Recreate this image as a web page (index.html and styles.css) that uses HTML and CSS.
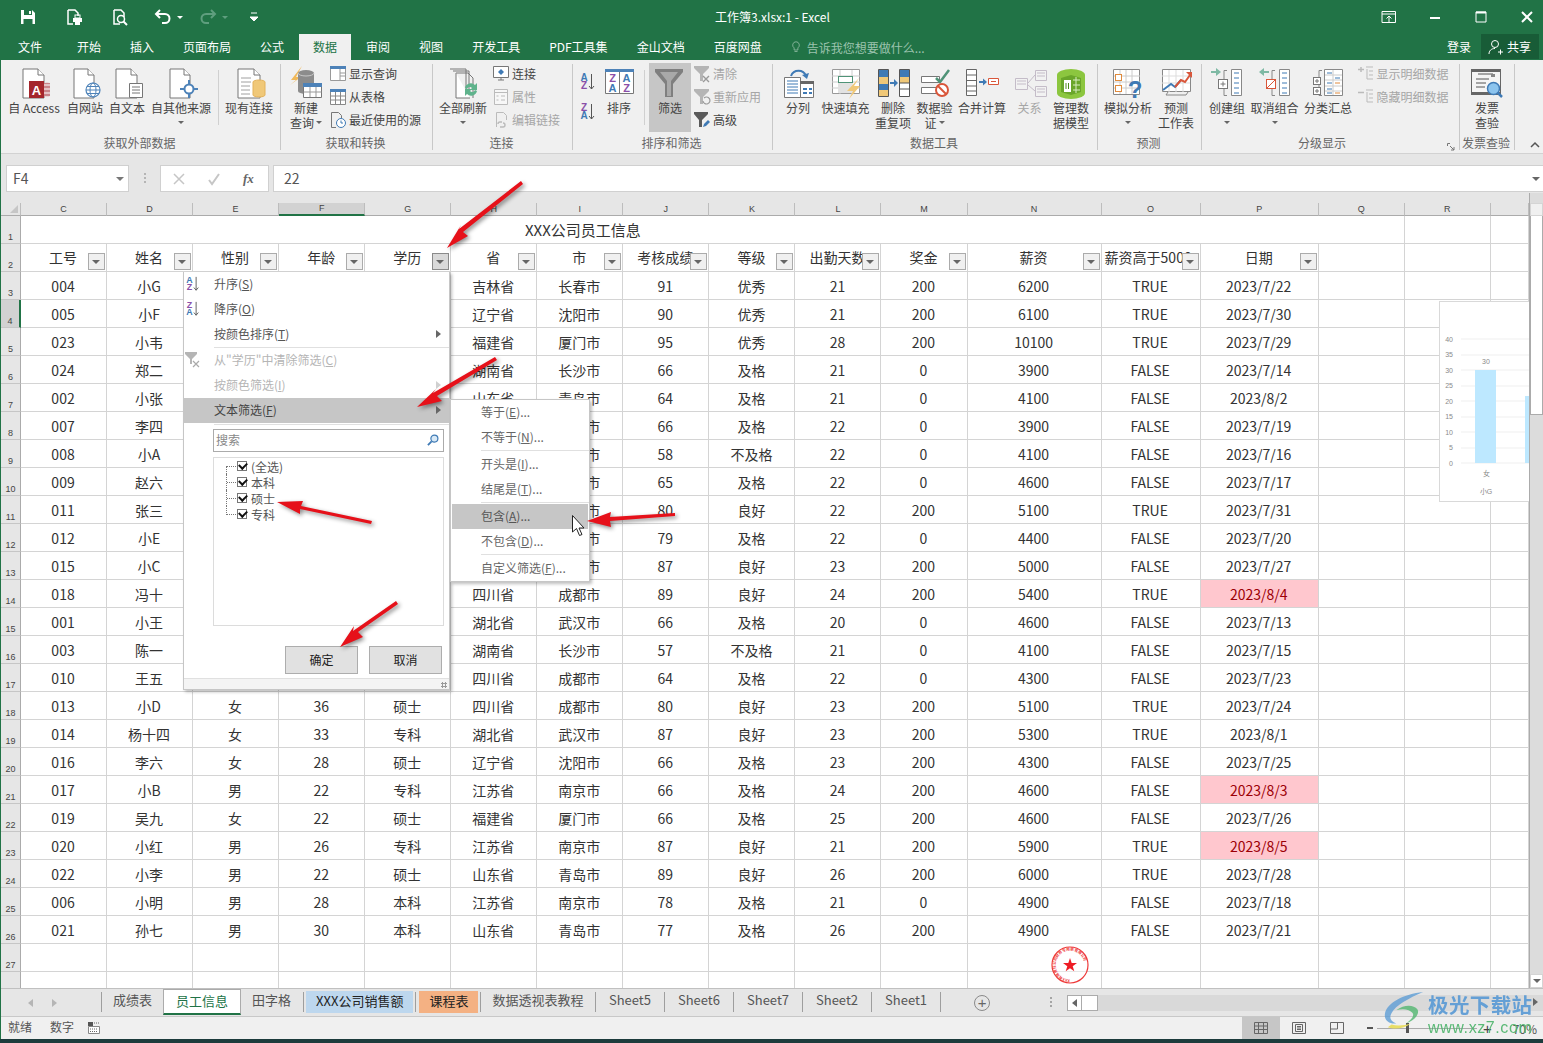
FILE: index.html
```html
<!DOCTYPE html>
<html lang="zh-CN">
<head>
<meta charset="utf-8">
<title>工作簿3.xlsx:1 - Excel</title>
<link rel="stylesheet" href="styles.css">
</head>
<body>
<div class="app">

<header class="titlebar">
  <div class="qat">
    <svg class="q16" viewBox="0 0 16 16"><path d="M1 1h11l3 3v11H1z" fill="#fff"/><rect x="4" y="1" width="8" height="5" fill="#217346"/><rect x="3.500" y="10" width="9" height="5" fill="#217346"/><rect x="9" y="2" width="2" height="3" fill="#fff"/></svg>
    <svg class="q16 q-m30" viewBox="0 0 16 16"><path d="M2 1h7l3 3v3M7 15H2V1" fill="none" stroke="#fff" stroke-width="1.500"/><rect x="7" y="9" width="9" height="4" fill="#fff"/><rect x="9" y="6" width="5" height="3" fill="none" stroke="#fff"/><rect x="9" y="13" width="5" height="3" fill="#fff"/></svg>
    <svg class="q16 q-m30" viewBox="0 0 16 16"><path d="M2 1h7l3 3v4M8 15H2V1" fill="none" stroke="#fff" stroke-width="1.500"/><circle cx="9" cy="10" r="3.500" fill="none" stroke="#fff" stroke-width="1.500"/><path d="M11.500 12.500L15 16" stroke="#fff" stroke-width="2"/></svg>
    <svg class="q16 q-m27" viewBox="0 0 16 16"><path d="M5 1L1 5l4 4M1.500 5H10a4.500 4.500 0 0 1 0 9H7" fill="none" stroke="#fff" stroke-width="2"/></svg>
    <i class="caret q-m6"></i>
    <svg class="q16 q-m17" viewBox="0 0 16 16"><path d="M11 1l4 4-4 4M14.500 5H6a4.500 4.500 0 0 0 0 9h3" fill="none" stroke="#5f9e7e" stroke-width="2"/></svg>
    <i class="caret dim q-m6"></i>
    <svg class="q8 q-m22" viewBox="0 0 8 10"><path d="M1 1h6M0 5h8l-4 4z" stroke="#fff" fill="#fff"/></svg>
  </div>
  <div class="doc-title">工作簿3.xlsx:1 - Excel</div>
  <div class="winctl">
    <svg class="q16" viewBox="0 0 16 16"><path d="M1 2.500h13.500v11H1z" fill="none" stroke="#fff"/><path d="M1 5h14" stroke="#fff"/><path d="M8 13V7M5.500 9.500L8 7l2.500 2.500" fill="none" stroke="#fff"/></svg>
    <svg class="q16" viewBox="0 0 16 16"><rect x="3" y="8" width="10" height="2" fill="#fff"/></svg>
    <svg class="q16" viewBox="0 0 16 16"><path d="M3 3h10v10H3z" fill="none" stroke="#fff"/><path d="M3 3.500h10" stroke="#fff" stroke-width="2"/></svg>
    <svg class="q16" viewBox="0 0 16 16"><path d="M3 3l10 10M13 3L3 13" stroke="#fff" stroke-width="2"/></svg>
  </div>
</header>

<nav class="tabsbar">
  <a class="rt rt-file">文件</a><a class="rt">开始</a><a class="rt">插入</a><a class="rt">页面布局</a><a class="rt">公式</a><a class="rt on">数据</a><a class="rt">审阅</a><a class="rt">视图</a><a class="rt">开发工具</a><a class="rt">PDF工具集</a><a class="rt">金山文档</a><a class="rt">百度网盘</a>
  <div class="tell">
    <svg class="q12" viewBox="0 0 12 16"><path d="M6 1a4.500 4.500 0 0 0-2.500 8.200V12h5V9.200A4.500 4.500 0 0 0 6 1z" fill="none" stroke="#9cc3ae"/><path d="M4 14h4" stroke="#9cc3ae"/></svg>
    <span>告诉我您想要做什么...</span>
  </div>
  <a class="login">登录</a>
  <div class="share">
    <svg class="q16" viewBox="0 0 16 16"><circle cx="7" cy="5" r="3.500" fill="none" stroke="#fff"/><path d="M1 15c0-3 2-5.500 6-5.500M10 13h5M12.500 10.500v5" fill="none" stroke="#fff"/></svg>
    <span>共享</span>
  </div>
</nav>

<section class="ribbon">
  <div class="grp g1">
    <div class="gb">
      <div class="big w54"><svg class="ic" viewBox="0 0 32 32"><path class="doc" d="M5 1H20L26 7V30H5Z"/><path class="doc" d="M20 1V7H26"/><path d="M26 15a6 2 0 0 1 6 0v13a6 2 0 0 1-6 0z" fill="#c9858a"/><path d="M25 17h7M25 21h7M25 25h7" stroke="#fff"/><rect x="11" y="13" width="15" height="17" fill="#a4262c"/><text class="t-a" x="18.500" y="27">A</text></svg><span>自 Access</span></div>
      <div class="big"><svg class="ic" viewBox="0 0 32 32"><path class="doc" d="M5 1H19L25 7V30H5Z"/><path class="doc" d="M19 1V7H25"/><circle cx="24" cy="22" r="7" fill="#fff" stroke="#4d82b8" stroke-width="1.200"/><ellipse cx="24" cy="22" rx="3" ry="7" fill="none" stroke="#4d82b8"/><path d="M17 22h14M18 18.500h12M18 25.500h12" stroke="#4d82b8"/></svg><span>自网站</span></div>
      <div class="big"><svg class="ic" viewBox="0 0 32 32"><path class="doc" d="M5 1H20L26 7V30H5Z"/><path class="doc" d="M20 1V7H26"/><path d="M18.500 15.500h13v14h-13z" fill="#fff" stroke="#767676"/><path d="M21 19h8M21 22h8M21 25h8" stroke="#767676"/></svg><span>自文本</span></div>
      <div class="big w60"><svg class="ic" viewBox="0 0 32 32"><path class="doc" d="M5 1H19L25 7V30H5Z"/><path class="doc" d="M19 1V7H25"/><circle cx="24" cy="21" r="4.500" fill="#fff" stroke="#4d82b8" stroke-width="2"/><path d="M24 12v5M24 25v5M15 21h5M28 21h5" stroke="#4d82b8" stroke-width="2"/></svg><span>自其他来源</span><i class="dd"></i></div>
      <i class="vsep vs1"></i>
      <div class="big w48"><svg class="ic" viewBox="0 0 32 32"><path class="doc" d="M5 1H21L27 7V30H5Z"/><path class="doc" d="M21 1V7H27"/><path d="M8 10h10M8 14h10M8 18h9M8 22h9M8 26h9" stroke="#a0a0a0"/><path d="M20 14a6 2 0 0 1 12 0v13a6 2 0 0 1-12 0z" fill="#f0c878" stroke="#e3b25b"/></svg><span>现有连接</span></div>
    </div>
    <div class="gl">获取外部数据</div>
  </div>
  <div class="grp g2">
    <div class="gb">
      <div class="big"><svg class="ic" viewBox="0 0 32 32"><path d="M12 -2L1 12h5L0 17 11 9H6z" fill="#f0b95a"/><path d="M8 5a8 3 0 0 1 16 0v18a8 3 0 0 1-16 0z" fill="#8c8c8c"/><path d="M8 5a8 3 0 0 0 16 0" fill="none" stroke="#c8c8c8"/><path d="M13.500 15.500h18v14h-18z" fill="#fff" stroke="#767676"/><path d="M13 15h19v4H13z" fill="#4d82b8"/><path d="M13.500 24h18M20 19v10M26 19v10" stroke="#999"/></svg><span>新建</span><span>查询 <i class="dd inl"></i></span></div>
      <div class="col">
        <div class="sm"><svg class="ic16" viewBox="0 0 16 16"><path d="M.5.5h15v14H.5z" fill="#fff" stroke="#999"/><path d="M0 0h16v3H0z" fill="#4d82b8"/><path d="M10 3v11M10 7h6M10 10h6" stroke="#999"/></svg>显示查询</div>
        <div class="sm"><svg class="ic16" viewBox="0 0 16 16"><path d="M.5.5h15v15H.5z" fill="#fff" stroke="#888"/><path d="M0 0h16v3H0z" fill="#4d82b8"/><path d="M.5 7h15M.5 11h15M5.500 3v12M10.500 3v12" stroke="#888"/></svg>从表格</div>
        <div class="sm"><svg class="ic16" viewBox="0 0 16 16"><path d="M1.500.5h7l3 3V6M6 15.500H1.500V.5" fill="none" stroke="#777"/><circle cx="11" cy="11" r="4.500" fill="#fff" stroke="#3f7ab5"/><path d="M11 8.500V11h2" fill="none" stroke="#3f7ab5"/></svg>最近使用的源</div>
      </div>
    </div>
    <div class="gl">获取和转换</div>
  </div>
  <div class="grp g3">
    <div class="gb">
      <div class="big w48"><svg class="ic" viewBox="0 0 32 32"><path d="M3 1h16v21M6 3h16v23M9 5h12l5 5v20" fill="none" stroke="#777"/><path d="M9 5v25h14" fill="#fff" stroke="#777"/><path d="M18 20a6 6 0 0 1 10-3l2-2v7h-7l2-2a3 3 0 0 0-5 1zM30 23a6 6 0 0 1-10 3l-2 2v-7h7l-2 2a3 3 0 0 0 5-1z" fill="#5fb38c"/></svg><span>全部刷新</span><i class="dd"></i></div>
      <div class="col">
        <div class="sm"><svg class="ic16" viewBox="0 0 16 16"><path d="M.5.5h15v11H.5z" fill="#fff" stroke="#777"/><path d="M5 14h6M8 12v2" stroke="#777"/><path d="M8 3l3 3-3 3-3-3z" fill="#3f7ab5"/></svg>连接</div>
        <div class="sm off"><svg class="ic16" viewBox="0 0 16 16"><path d="M1.500.5h13v15h-13z" fill="#f7f7f7" stroke="#bbb"/><path d="M1 3.500h14M3.500 7h2M8 7h4M3.500 11h2M8 11h4" stroke="#bbb"/></svg>属性</div>
        <div class="sm off"><svg class="ic16" viewBox="0 0 16 16"><path d="M3.500.5h7l3 3V8M3.500 15V.5" fill="none" stroke="#bbb"/><path d="M5 12a2 2 0 0 1 2-2h2M10 15H7M10 11a2 2 0 0 1 0 4" fill="none" stroke="#bbb" stroke-width="1.400"/></svg>编辑链接</div>
      </div>
    </div>
    <div class="gl">连接</div>
  </div>
  <div class="grp g4">
    <div class="gb">
      <div class="sortcol">
        <svg class="ic16t" viewBox="0 0 16 18"><text class="t-s blue" x="4" y="8">A</text><text class="t-s purp" x="4" y="16">Z</text><path d="M11.500 1v15M9 13l2.500 3 2.500-3" fill="none" stroke="#555"/></svg>
        <svg class="ic16t" viewBox="0 0 16 18"><text class="t-s purp" x="4" y="8">Z</text><text class="t-s blue" x="4" y="16">A</text><path d="M11.500 1v15M9 13l2.500 3 2.500-3" fill="none" stroke="#555"/></svg>
      </div>
      <div class="big"><svg class="ic" viewBox="0 0 32 32"><path d="M2.500 1.500h28v24h-28z" fill="#fff" stroke="#777"/><path d="M2 1h29v3H2z" fill="#4d82b8"/><path d="M16.500 4v21" stroke="#777"/><text class="t-m purp" x="9.500" y="14">Z</text><text class="t-m blue" x="23.500" y="14">A</text><text class="t-m blue" x="9.500" y="24">A</text><text class="t-m purp" x="23.500" y="24">Z</text></svg><span>排序</span></div>
      <i class="vsep vs4"></i>
      <div class="big filter"><svg class="ic" viewBox="0 0 32 32"><path d="M1 1h28v3L19 16v13h-8V16L1 4z" fill="#7f7f7f"/><path d="M6 4h18l-7 9v15h-4V13z" fill="#a9a9a9"/></svg><span>筛选</span></div>
      <div class="col">
        <div class="sm off"><svg class="ic16" viewBox="0 0 16 16"><path d="M0 0h15v2L9 8v7H6V8L0 2z" fill="#b5b5b5"/><path d="M9 10l6 6M15 10l-6 6" stroke="#999" stroke-width="1.400"/></svg>清除</div>
        <div class="sm off"><svg class="ic16" viewBox="0 0 16 16"><path d="M0 0h15v2L9 8v7H6V8L0 2z" fill="#b5b5b5"/><path d="M9 12a3.500 3.500 0 1 0 1-3" fill="none" stroke="#999" stroke-width="1.200"/></svg>重新应用</div>
        <div class="sm"><svg class="ic16" viewBox="0 0 16 16"><path d="M0 0h14v2L8 8v7H5V8L0 2z" fill="#5a5a5a"/><path d="M9 15l1-3 4-4 2 2-4 4z" fill="#3f7ab5"/></svg>高级</div>
      </div>
    </div>
    <div class="gl">排序和筛选</div>
  </div>
  <div class="grp g5">
    <div class="gb">
      <div class="big"><svg class="ic" viewBox="0 0 32 32"><path d="M2.500 9.500h16v20h-16z" fill="#fff" stroke="#777"/><path d="M5 13h11M5 16h11M5 19h11M5 22h11M5 25h11" stroke="#3f7ab5"/><path d="M18.500 13.500h13v16h-13z" fill="#fff" stroke="#777"/><path d="M18 13h14v3H18z" fill="#666"/><path d="M21 20h4v2h-4zM27 20h3v2h-3zM21 24h4v2h-4zM27 24h3v2h-3z" fill="#3f7ab5"/><path d="M9 8a8 8 0 0 1 15 0" fill="none" stroke="#3f7ab5" stroke-width="2"/><path d="M20 7l5 4 2-6z" fill="#3f7ab5"/></svg><span>分列</span></div>
      <div class="big w48"><svg class="ic" viewBox="0 0 32 32"><path d="M2.500 1.500h27v24h-27z" fill="#fff" stroke="#999"/><path d="M2 8h28M2 14h28M2 20h28M10 2v24M22 2v24" stroke="#ccc"/><rect x="8.500" y="8.500" width="14" height="6" fill="#fff" stroke="#4f9377"/><path d="M8 15h14v10H8z" fill="#e2e2e2"/><path d="M29 10l-12 13h6l-4 8 11-13h-6z" fill="#f0c878"/></svg><span>快速填充</span></div>
      <div class="big"><svg class="ic" viewBox="0 0 32 32"><path d="M1.500 1.500h10v27h-10zM22.500 1.500h10v27h-10z" fill="#fff" stroke="#555"/><path d="M2 2h9v7H2zM2 16h9v6H2zM23 2h9v7H23z" fill="#3f7ab5"/><path d="M2 9h9v7H2zM2 22h9v6H2zM23 9h9v6H23z" fill="#f0c878"/><path d="M23 15h9M23 21h9" stroke="#555"/><path d="M13 15h6" stroke="#3f7ab5" stroke-width="2"/><path d="M17 11l4 4-4 4z" fill="#3f7ab5"/></svg><span>删除</span><span>重复项</span></div>
      <div class="big"><svg class="ic" viewBox="0 0 32 32"><path d="M2.500 8.500h18v6h-18zM2.500 19.500h18v6h-18z" fill="#fff" stroke="#777"/><path d="M17 10l4 4 9-12" fill="none" stroke="#4f9377" stroke-width="2.500"/><circle cx="23" cy="22" r="6" fill="#fff" stroke="#d9563a" stroke-width="2"/><path d="M19 18l8 8" stroke="#d9563a" stroke-width="2"/></svg><span>数据验</span><span>证 <i class="dd inl"></i></span></div>
      <div class="big w48"><svg class="ic" viewBox="0 0 32 32"><path d="M.5 1.500h10v26h-10z" fill="#fff" stroke="#666"/><path d="M1 7h9M1 12.500h9M1 18h9M1 23h9" stroke="#666"/><path d="M13 14h6" stroke="#3f7ab5" stroke-width="2"/><path d="M17 10.500l4 3.500-4 3.500z" fill="#3f7ab5"/><path d="M22.500 10.500h10v6h-10z" fill="#fff" stroke="#d9563a"/><path d="M25 13.500h5" stroke="#d9563a"/></svg><span>合并计算</span></div>
      <div class="big off"><svg class="ic" viewBox="0 0 32 32"><path d="M1.500 10.500h12v11h-12zM21.500 2.500h11v10h-11zM21.500 18.500h11v10h-11z" fill="#f2f2f2" stroke="#c4bcc8"/><path d="M3 13h9M3 16h9M23 5h8M23 8h8M23 21h8M23 24h8" stroke="#c4bcc8"/><path d="M14 15l7-8M14 17l7 6" stroke="#c4bcc8"/></svg><span>关系</span></div>
      <div class="big"><svg class="ic" viewBox="0 0 32 32"><path d="M2 7a14 6 0 0 1 28 0v18a14 6 0 0 1-28 0z" fill="#8cc63f"/><path d="M6 10l10-3 10 3v14l-10 3-10-3z" fill="#6aa62a"/><path d="M9 12h7v12H9z" fill="#fff"/><path d="M18 12h7M18 17h7M18 22h7M21 9v16" stroke="#d8edc0"/><path d="M11 21v-6M13.500 15v6" stroke="#4f8a1e"/></svg><span>管理数</span><span>据模型</span></div>
    </div>
    <div class="gl">数据工具</div>
  </div>
  <div class="grp g6">
    <div class="gb">
      <div class="big w48"><svg class="ic" viewBox="0 0 32 32"><path d="M1.500 1.500h26v25h-26z" fill="#fff" stroke="#888"/><path d="M8 2v24M14 2v24M20 2v24M2 8h26M2 14h26M2 20h26" stroke="#ccc"/><rect x="3.500" y="6.500" width="6" height="6" fill="#fff" stroke="#e08a3c"/><rect x="3.500" y="17.500" width="6" height="6" fill="#fff" stroke="#e08a3c"/><text class="t-q" x="23" y="30">?</text></svg><span>模拟分析</span><i class="dd"></i></div>
      <div class="big"><svg class="ic" viewBox="0 0 32 32"><path d="M2.500 1.500h28v22h-28z" fill="#fff" stroke="#888"/><path d="M9 2v22M16 2v22M23 2v22M2 8h28M2 15h28" stroke="#ddd"/><path d="M3 22l8-6 4 3 6-7" fill="none" stroke="#3f7ab5" stroke-width="2"/><path d="M15 19l6-7 4 2 5-7" fill="none" stroke="#d9563a" stroke-width="2"/><path d="M26 4h6v6z" fill="#d9563a"/><path d="M8 24l-2 3h20l2-3" fill="none" stroke="#888"/></svg><span>预测</span><span>工作表</span></div>
    </div>
    <div class="gl">预测</div>
  </div>
  <div class="grp g7">
    <div class="gb">
      <div class="big"><svg class="ic" viewBox="0 0 32 32"><path d="M0 4h7" stroke="#7eb9a4" stroke-width="2"/><path d="M5 0l5 4-5 4z" fill="#7eb9a4"/><path d="M16 2.500h-3v25h3" fill="none" stroke="#888"/><rect x="7.500" y="11.500" width="9" height="9" fill="#fff" stroke="#777"/><path d="M9.500 16h5M12 13.500v5" stroke="#777"/><path d="M20.500 1.500h10v26h-10z" fill="#fff" stroke="#888"/><path d="M23 5h5M23 10h5M23 15h5M23 20h5M23 25h5" stroke="#3f7ab5"/></svg><span>创建组</span><i class="dd"></i></div>
      <div class="big w48"><svg class="ic" viewBox="0 0 32 32"><path d="M10 4H3" stroke="#7eb9a4" stroke-width="2"/><path d="M5 0L0 4l5 4z" fill="#7eb9a4"/><path d="M16 2.500h-3v25h3" fill="none" stroke="#888"/><rect x="7.500" y="11.500" width="9" height="9" fill="#fff" stroke="#d9563a"/><path d="M8 20l8-8" stroke="#d9563a"/><path d="M20.500 1.500h10v26h-10z" fill="#fff" stroke="#888"/><path d="M23 5h5M23 10h5M23 15h5M23 20h5M23 25h5" stroke="#3f7ab5"/></svg><span>取消组合</span><i class="dd"></i></div>
      <div class="big w48"><svg class="ic" viewBox="0 0 32 32"><path d="M10 2.500H7v25h3" fill="none" stroke="#888"/><rect x="1.500" y="9.500" width="7" height="7" fill="#fff" stroke="#777"/><path d="M3 13h4M5 11v4" stroke="#777"/><rect x="1.500" y="19.500" width="7" height="7" fill="#fff" stroke="#777"/><path d="M3 23h4M5 21v4" stroke="#777"/><path d="M12.500 1.500h18v26h-18z" fill="#fff" stroke="#888"/><path d="M21 2v25M13 7h17M13 12h17M13 18h17M13 23h17" stroke="#ccc"/><path d="M15 5h5M15 15h5M15 21h5" stroke="#3f7ab5"/><path d="M23 15h5M23 25h5" stroke="#e08a3c"/><path d="M23 10h5M15 25h5" stroke="#3f7ab5"/></svg><span>分类汇总</span></div>
      <div class="col">
        <div class="sm off"><svg class="ic16" viewBox="0 0 16 16"><path d="M0 3.500h6M3 1v5" stroke="#bbb" stroke-width="1.500"/><path d="M8 1h7M11 5h4M11 9h4M11 13h4M9 3v10h2" fill="none" stroke="#bbb"/></svg>显示明细数据</div>
        <div class="sm off"><svg class="ic16" viewBox="0 0 16 16"><path d="M0 3.500h6" stroke="#bbb" stroke-width="1.500"/><path d="M8 1h7M11 5h4M11 9h4M11 13h4M9 3v10h2" fill="none" stroke="#bbb"/></svg>隐藏明细数据</div>
      </div>
    </div>
    <div class="gl gl-launch">分级显示<svg class="launch" viewBox="0 0 8 8"><path d="M.5 3V.5H3M3 3l4 4M7 4v3H4" fill="none" stroke="#777"/></svg></div>
  </div>
  <div class="grp g8">
    <div class="gb">
      <div class="big"><svg class="ic" viewBox="0 0 32 32"><path d="M.5 1.500h29v25H.5z" fill="#f5f5f5" stroke="#666"/><path d="M0 1h30v3H0zM0 24h30v3H0z" fill="#666"/><path d="M7 6h15M5 11h13M5 15h10M5 19h9" stroke="#555"/><rect x="20" y="6" width="4" height="3" fill="#888"/><circle cx="22.500" cy="20.500" r="6" fill="#8cc4ee" stroke="#3f7ab5" stroke-width="1.500"/><path d="M26.500 24.500L31 29" stroke="#3f7ab5" stroke-width="2.500"/></svg><span>发票</span><span>查验</span></div>
    </div>
    <div class="gl">发票查验</div>
  </div>
  <svg class="collapse" viewBox="0 0 10 6"><path d="M1 5l4-4 4 4" fill="none" stroke="#555" stroke-width="1.500"/></svg>
</section>

<section class="fbar">
  <div class="namebox">F4<i class="dd nb"></i></div>
  <div class="grip"></div>
  <div class="fxbox">
    <svg class="q12" viewBox="0 0 12 12"><path d="M1 1l10 10M11 1L1 11" stroke="#c6c6c6" stroke-width="1.500"/></svg>
    <svg class="q12" viewBox="0 0 12 12"><path d="M1 7l3 4 7-10" fill="none" stroke="#c6c6c6" stroke-width="2"/></svg>
    <span class="fx">fx</span>
  </div>
  <div class="formula">22<i class="dd fchev"></i></div>
</section>

<section class="sheet">
  <div class="gridwrap">
    <table class="grid">
      <colgroup><col class="c-r"><col class="c-a"><col class="c-a"><col class="c-a"><col class="c-a"><col class="c-a"><col class="c-a"><col class="c-a"><col class="c-a"><col class="c-a"><col class="c-a"><col class="c-a"><col class="c-n"><col class="c-o"><col class="c-p"><col class="c-a"><col class="c-a"><col class="c-s"></colgroup>
      <thead><tr><th class="corner"><i class="tri"></i></th><th>C</th><th>D</th><th>E</th><th class="sel">F</th><th>G</th><th>H</th><th>I</th><th>J</th><th>K</th><th>L</th><th>M</th><th>N</th><th>O</th><th>P</th><th>Q</th><th>R</th><th></th></tr></thead>
      <tbody>
        <tr><th>1</th><td class="title" colspan="14">XXX公司员工信息</td><td></td><td></td><td></td></tr>
        <tr><th>2</th><td class="h">工号<i class="fb"></i></td><td class="h">姓名<i class="fb"></i></td><td class="h">性别<i class="fb"></i></td><td class="h">年龄<i class="fb"></i></td><td class="h">学历<i class="fb act"></i></td><td class="h">省<i class="fb"></i></td><td class="h">市<i class="fb"></i></td><td class="h">考核成绩<i class="fb"></i></td><td class="h">等级<i class="fb"></i></td><td class="h">出勤天数<i class="fb"></i></td><td class="h">奖金<i class="fb"></i></td><td class="h">薪资<i class="fb"></i></td><td class="h hl">薪资高于5000<i class="fb"></i></td><td class="h">日期<i class="fb"></i></td><td></td><td></td><td></td></tr>
        <tr><th>3</th><td>004</td><td>小G</td><td></td><td></td><td></td><td>吉林省</td><td>长春市</td><td>91</td><td>优秀</td><td>21</td><td>200</td><td>6200</td><td>TRUE</td><td>2023/7/22</td><td></td><td></td><td></td></tr>
        <tr><th class="sel">4</th><td>005</td><td>小F</td><td></td><td></td><td></td><td>辽宁省</td><td>沈阳市</td><td>90</td><td>优秀</td><td>21</td><td>200</td><td>6100</td><td>TRUE</td><td>2023/7/30</td><td></td><td></td><td></td></tr>
        <tr><th>5</th><td>023</td><td>小韦</td><td></td><td></td><td></td><td>福建省</td><td>厦门市</td><td>95</td><td>优秀</td><td>28</td><td>200</td><td>10100</td><td>TRUE</td><td>2023/7/29</td><td></td><td></td><td></td></tr>
        <tr><th>6</th><td>024</td><td>郑二</td><td></td><td></td><td></td><td>湖南省</td><td>长沙市</td><td>66</td><td>及格</td><td>21</td><td>0</td><td>3900</td><td>FALSE</td><td>2023/7/14</td><td></td><td></td><td></td></tr>
        <tr><th>7</th><td>002</td><td>小张</td><td></td><td></td><td></td><td>山东省</td><td>青岛市</td><td>64</td><td>及格</td><td>21</td><td>0</td><td>4100</td><td>FALSE</td><td>2023/8/2</td><td></td><td></td><td></td></tr>
        <tr><th>8</th><td>007</td><td>李四</td><td></td><td></td><td></td><td></td><td>南京市</td><td>66</td><td>及格</td><td>22</td><td>0</td><td>3900</td><td>FALSE</td><td>2023/7/19</td><td></td><td></td><td></td></tr>
        <tr><th>9</th><td>008</td><td>小A</td><td></td><td></td><td></td><td></td><td>南京市</td><td>58</td><td>不及格</td><td>22</td><td>0</td><td>4100</td><td>FALSE</td><td>2023/7/16</td><td></td><td></td><td></td></tr>
        <tr><th>10</th><td>009</td><td>赵六</td><td></td><td></td><td></td><td></td><td>南京市</td><td>65</td><td>及格</td><td>22</td><td>0</td><td>4600</td><td>FALSE</td><td>2023/7/17</td><td></td><td></td><td></td></tr>
        <tr><th>11</th><td>011</td><td>张三</td><td></td><td></td><td></td><td></td><td>南京市</td><td>80</td><td>良好</td><td>22</td><td>200</td><td>5100</td><td>TRUE</td><td>2023/7/31</td><td></td><td></td><td></td></tr>
        <tr><th>12</th><td>012</td><td>小E</td><td></td><td></td><td></td><td></td><td>南京市</td><td>79</td><td>及格</td><td>22</td><td>0</td><td>4400</td><td>FALSE</td><td>2023/7/20</td><td></td><td></td><td></td></tr>
        <tr><th>13</th><td>015</td><td>小C</td><td></td><td></td><td></td><td></td><td>南京市</td><td>87</td><td>良好</td><td>23</td><td>200</td><td>5000</td><td>FALSE</td><td>2023/7/27</td><td></td><td></td><td></td></tr>
        <tr><th>14</th><td>018</td><td>冯十</td><td></td><td></td><td></td><td>四川省</td><td>成都市</td><td>89</td><td>良好</td><td>24</td><td>200</td><td>5400</td><td>TRUE</td><td class="pink">2023/8/4</td><td></td><td></td><td></td></tr>
        <tr><th>15</th><td>001</td><td>小王</td><td></td><td></td><td></td><td>湖北省</td><td>武汉市</td><td>66</td><td>及格</td><td>20</td><td>0</td><td>4600</td><td>FALSE</td><td>2023/7/13</td><td></td><td></td><td></td></tr>
        <tr><th>16</th><td>003</td><td>陈一</td><td></td><td></td><td></td><td>湖南省</td><td>长沙市</td><td>57</td><td>不及格</td><td>21</td><td>0</td><td>4100</td><td>FALSE</td><td>2023/7/15</td><td></td><td></td><td></td></tr>
        <tr><th>17</th><td>010</td><td>王五</td><td></td><td></td><td></td><td>四川省</td><td>成都市</td><td>64</td><td>及格</td><td>22</td><td>0</td><td>4300</td><td>FALSE</td><td>2023/7/23</td><td></td><td></td><td></td></tr>
        <tr><th>18</th><td>013</td><td>小D</td><td>女</td><td>36</td><td>硕士</td><td>四川省</td><td>成都市</td><td>80</td><td>良好</td><td>23</td><td>200</td><td>5100</td><td>TRUE</td><td>2023/7/24</td><td></td><td></td><td></td></tr>
        <tr><th>19</th><td>014</td><td>杨十四</td><td>女</td><td>33</td><td>专科</td><td>湖北省</td><td>武汉市</td><td>87</td><td>良好</td><td>23</td><td>200</td><td>5300</td><td>TRUE</td><td>2023/8/1</td><td></td><td></td><td></td></tr>
        <tr><th>20</th><td>016</td><td>李六</td><td>女</td><td>28</td><td>硕士</td><td>辽宁省</td><td>沈阳市</td><td>66</td><td>及格</td><td>23</td><td>200</td><td>4300</td><td>FALSE</td><td>2023/7/25</td><td></td><td></td><td></td></tr>
        <tr><th>21</th><td>017</td><td>小B</td><td>男</td><td>22</td><td>专科</td><td>江苏省</td><td>南京市</td><td>66</td><td>及格</td><td>24</td><td>200</td><td>4600</td><td>FALSE</td><td class="pink">2023/8/3</td><td></td><td></td><td></td></tr>
        <tr><th>22</th><td>019</td><td>吴九</td><td>女</td><td>22</td><td>硕士</td><td>福建省</td><td>厦门市</td><td>66</td><td>及格</td><td>25</td><td>200</td><td>4600</td><td>FALSE</td><td>2023/7/26</td><td></td><td></td><td></td></tr>
        <tr><th>23</th><td>020</td><td>小红</td><td>男</td><td>26</td><td>专科</td><td>江苏省</td><td>南京市</td><td>87</td><td>良好</td><td>21</td><td>200</td><td>5900</td><td>TRUE</td><td class="pink">2023/8/5</td><td></td><td></td><td></td></tr>
        <tr><th>24</th><td>022</td><td>小李</td><td>男</td><td>22</td><td>硕士</td><td>山东省</td><td>青岛市</td><td>89</td><td>良好</td><td>26</td><td>200</td><td>6000</td><td>TRUE</td><td>2023/7/28</td><td></td><td></td><td></td></tr>
        <tr><th>25</th><td>006</td><td>小明</td><td>男</td><td>28</td><td>本科</td><td>江苏省</td><td>南京市</td><td>78</td><td>及格</td><td>21</td><td>0</td><td>4900</td><td>FALSE</td><td>2023/7/18</td><td></td><td></td><td></td></tr>
        <tr><th>26</th><td>021</td><td>孙七</td><td>男</td><td>30</td><td>本科</td><td>山东省</td><td>青岛市</td><td>77</td><td>及格</td><td>26</td><td>200</td><td>4900</td><td>FALSE</td><td>2023/7/21</td><td></td><td></td><td></td></tr>
        <tr><th>27</th><td></td><td></td><td></td><td></td><td></td><td></td><td></td><td></td><td></td><td></td><td></td><td></td><td></td><td></td><td></td><td></td><td></td></tr>
        <tr><th></th><td></td><td></td><td></td><td></td><td></td><td></td><td></td><td></td><td></td><td></td><td></td><td></td><td></td><td></td><td></td><td></td><td></td></tr>
      </tbody>
    </table>
  </div>
  <div class="vscroll">
    <div class="vs-up"></div>
    <div class="vs-thumb"></div>
    <div class="vs-track"></div>
    <div class="vs-down"><i class="dd"></i></div>
  </div>
</section>

<section class="tabsrow">
  <div class="tnav"><i class="tl"></i><i class="tr"></i></div>
  <i class="sep"></i>
  <a class="tab">成绩表</a>
  <a class="tab active">员工信息</a>
  <a class="tab tab-r">田字格</a>
  <i class="sep"></i>
  <a class="tab blue-t">XXX公司销售额</a>
  <i class="sep"></i>
  <a class="tab orange-t">课程表</a>
  <i class="sep"></i>
  <a class="tab tab-d">数据透视表教程</a>
  <i class="sep"></i>
  <a class="tab tab-w">Sheet5</a>
  <i class="sep"></i>
  <a class="tab tab-w">Sheet6</a>
  <i class="sep"></i>
  <a class="tab tab-w">Sheet7</a>
  <i class="sep"></i>
  <a class="tab tab-w">Sheet2</a>
  <i class="sep"></i>
  <a class="tab tab-w">Sheet1</a>
  <i class="sep"></i>
  <div class="addsheet">+</div>
  <div class="grip2"></div>
  <div class="hscroll"><div class="hs-l"><i class="tl dark"></i></div><div class="hs-t"></div><div class="hs-track"></div><div class="hs-r"><i class="tr dark"></i></div></div>
</section>

<footer class="status">
  <span class="st1">就绪</span>
  <span class="st2">数字</span>
  <svg class="q12 st3" viewBox="0 0 12 12"><path d="M0 0h5v4H0z" fill="#555"/><path d="M.5 4.500h11v7H.5z" fill="#fff" stroke="#888"/><path d="M6 1h6M2 7h8M2 9.500h8" stroke="#666" stroke-dasharray="1 1"/></svg>
  <div class="views">
    <div class="view on"><svg class="q16" viewBox="0 0 16 16"><path d="M1.500 2.500h13v11h-13zM1.500 6h13M1.500 9.500h13M5.500 2.500v11M10.500 2.500v11" fill="none" stroke="#666"/></svg></div>
    <div class="view"><svg class="q16" viewBox="0 0 16 16"><path d="M1.500 2.500h13v11h-13z" fill="none" stroke="#666"/><path d="M4.500 4.500h7v7h-7zM6 6.500h4M6 8h4M6 9.500h4" fill="none" stroke="#666"/></svg></div>
    <div class="view"><svg class="q16" viewBox="0 0 16 16"><path d="M1.500 2.500h13v11h-13zM1.500 9h7V2.500" fill="none" stroke="#666"/></svg></div>
  </div>
  <div class="zoomer"><i class="z-min"></i><div class="z-track"><i class="z-thumb"></i></div><i class="z-plus">+</i><span class="z-val">70%</span></div>
</footer>
<div class="strip"></div>

</div>

<!-- 图表覆盖层 -->
<aside class="chart">
  <svg viewBox="0 0 91 201" class="chart-svg">
    <path d="M22 38h69M22 54h69M22 69h69M22 85h69M22 100h69M22 116h69M22 131h69M22 147h69M22 162h69" stroke="#efefef"/>
    <rect x="36" y="69" width="21" height="93" fill="#bde8ff"/>
    <rect x="86" y="95" width="5" height="67" fill="#bde8ff"/>
    <text class="ct" x="14" y="40.500">40</text><text class="ct" x="14" y="56">35</text><text class="ct" x="14" y="71.500">30</text><text class="ct" x="14" y="87">25</text><text class="ct" x="14" y="102.500">20</text><text class="ct" x="14" y="118">15</text><text class="ct" x="14" y="133.500">10</text><text class="ct" x="14" y="149">5</text><text class="ct" x="14" y="164.500">0</text>
    <text class="ct mid" x="47" y="63">30</text><text class="ct mid" x="47" y="175">女</text><text class="ct mid" x="47" y="193">小G</text>
  </svg>
</aside>

<!-- 印章 -->
<svg class="stamp" viewBox="0 0 40 40">
  <defs><path id="arc" d="M20 34.500A14.500 14.500 0 1 1 20.100 34.500"/></defs>
  <circle cx="20" cy="20" r="18" fill="#fff" fill-opacity=".4" stroke="#ee3a3a" stroke-width="1.200"/>
  <text class="stamp-t"><textPath href="#arc">XXX有限责任公司财务专用章有限公司</textPath></text>
  <path d="M20 13l1.700 5h5.300l-4.300 3.200 1.600 5.100L20 23.200l-4.300 3.100 1.600-5.100L13 18h5.300z" fill="#ee1c25"/>
</svg>

<!-- 筛选菜单 -->
<div class="menu">
  <div class="mi"><svg class="mic" viewBox="0 0 16 18"><text class="t-s blue" x="4" y="8">A</text><text class="t-s purp" x="4" y="16">Z</text><path d="M11.500 1v15M9 13l2.500 3 2.500-3" fill="none" stroke="#555"/></svg>升序(<u>S</u>)</div>
  <div class="mi"><svg class="mic" viewBox="0 0 16 18"><text class="t-s purp" x="4" y="8">Z</text><text class="t-s blue" x="4" y="16">A</text><path d="M11.500 1v15M9 13l2.500 3 2.500-3" fill="none" stroke="#555"/></svg>降序(<u>O</u>)</div>
  <div class="mi"><span class="mic"></span>按颜色排序(<u>T</u>)<i class="mar"></i></div>
  <div class="msep"></div>
  <div class="mi dis"><svg class="mic" viewBox="0 0 16 16"><path d="M0 0h12v2L7 7v5H5V7L0 2z" fill="#b5b5b5"/><path d="M8 9l6 6M14 9l-6 6" stroke="#aaa" stroke-width="1.200"/></svg>从"学历"中清除筛选(<u>C</u>)</div>
  <div class="mi dis"><span class="mic"></span>按颜色筛选(<u>I</u>)<i class="mar lite"></i></div>
  <div class="mi hot"><span class="mic"></span>文本筛选(<u>F</u>)<i class="mar"></i></div>
  <div class="msep ms2"></div>
  <div class="search"><span>搜索</span><svg class="q12" viewBox="0 0 13 13"><circle cx="8" cy="5" r="3.800" fill="#d8e9f6" stroke="#3f7ab5" stroke-width="1.300"/><path d="M5 8l-4 4" stroke="#3f7ab5" stroke-width="2"/></svg></div>
  <div class="tree">
    <div class="ti"><i class="dots top"></i><i class="cb"></i>(全选)</div>
    <div class="ti"><i class="dots"></i><i class="cb"></i>本科</div>
    <div class="ti"><i class="dots"></i><i class="cb"></i>硕士</div>
    <div class="ti"><i class="dots end"></i><i class="cb"></i>专科</div>
  </div>
  <div class="btns"><button class="btn">确定</button><button class="btn">取消</button></div>
  <div class="mfoot"><i class="gripper"></i></div>
</div>

<div class="submenu">
  <div class="si">等于(<u>E</u>)...</div>
  <div class="si">不等于(<u>N</u>)...</div>
  <div class="msep s3"></div>
  <div class="si">开头是(<u>I</u>)...</div>
  <div class="si">结尾是(<u>T</u>)...</div>
  <div class="msep s3"></div>
  <div class="si hot">包含(<u>A</u>)...</div>
  <div class="si">不包含(<u>D</u>)...</div>
  <div class="msep s3"></div>
  <div class="si">自定义筛选(<u>F</u>)...</div>
</div>

<!-- 标注箭头 -->
<svg class="arrows" viewBox="0 0 1543 1043">
  <polygon points="447,248 468,236 463,232 523,184 521,181 459,229 461,225"/>
  <polygon points="417,407 442,401 437,396 497,360 495,357 433,393 436,389"/>
  <polygon points="277,502 303,501 301,506 372,521 371,524 300,509 300,514"/>
  <polygon points="340,647 363,637 358,632 398,604 396,601 353,631 354,626"/>
  <polygon points="587,521 611,527 610,521 675,516 675,513 610,517 611,512"/>
</svg>
<svg class="cursor" viewBox="0 0 14 21"><path d="M.5.500V17l4-3.500 3 7 2.500-1-3-6.500H12z" fill="#fff" stroke="#222"/></svg>

<!-- 水印 -->
<div class="wm">
  <svg class="wm-logo" viewBox="0 0 44 44"><path d="M42 1C22 3 4 12 2 24c-1 7 5 11 12 10-6-2-8-6-5-11C13 15 28 7 42 1z" fill="#5b9bd5" fill-opacity=".85"/><path d="M14 20c8-6 18-6 22-1 3 5-3 12-12 15 6-4 9-8 7-11-3-4-10-5-17-3z" fill="#4fb56d" fill-opacity=".85"/><path d="M5 38c8 3 18 1 24-4-6 2-14 3-20 1z" fill="#e8dd5c"/></svg>
  <div class="wm-text"><div class="wm-1">极光下载站</div><div class="wm-2">www.xz7.com</div></div>
</div>
</body>
</html>
```
FILE: styles.css
```css
* { box-sizing: border-box; }
html, body { margin: 0; padding: 0; height: 1043px; overflow: hidden; }
body {
  position: relative;
  font-family: "Noto Sans CJK SC", "Noto Sans", sans-serif;
  font-size: 12px;
  color: #444;
  background: #e6e6e6;
}
svg { overflow: visible; display: block; flex: none; }
i { display: block; font-style: normal; }
a { display: block; }

.app { height: 1043px; display: flex; flex-direction: column; border-left: 1px solid #217346; }

/* title bar */
.titlebar { height: 34px; margin-left: -1px; background: #217346; color: #fff; display: flex; align-items: center; flex: none; }
.qat { display: flex; align-items: center; padding-left: 20px; width: 715px; }
.q16 { width: 16px; height: 16px; }
.q12 { width: 12px; height: 12px; }
.q8 { width: 8px; height: 10px; }
.q-m30 { margin-left: 30px; }
.q-m27 { margin-left: 27px; }
.q-m17 { margin-left: 17px; }
.q-m22 { margin-left: 22px; }
.q-m6 { margin-left: 6px; }
.caret { width: 0; height: 0; border-left: 3px solid transparent; border-right: 3px solid transparent; border-top: 3px solid #fff; }
.caret.dim { border-top-color: #5f9e7e; }
.doc-title { font-size: 12px; line-height: 34px; color: #fff; }
.winctl { margin-left: auto; margin-right: 8px; display: flex; gap: 30px; }

/* ribbon tabs */
.tabsbar { height: 26px; margin-left: -1px; background: #217346; display: flex; align-items: stretch; gap: 1px; padding-left: 4px; flex: none; }
.rt { padding: 0 14px; color: #fff; line-height: 25px; font-size: 12px; }
.rt-file { margin-right: 6px; }
.rt.on { background: #f0f0f0; color: #217346; }
.tell { display: flex; align-items: center; gap: 5px; margin-left: 13px; color: #9cc3ae; font-size: 12px; }
.login { margin-left: auto; color: #fff; line-height: 25px; margin-right: -1px; }
.share { margin: 0 4px 1px 10px; width: 58px; background: #185c37; color: #fff; display: flex; align-items: center; gap: 3px; padding-left: 7px; }

/* ribbon */
.ribbon { height: 94px; flex: none; background: #f0f0f0; border-bottom: 1px solid #d2d2d2; display: flex; position: relative; color: #444; }
.grp { display: flex; flex-direction: column; position: relative; }
.grp::after { content: ""; position: absolute; right: 0; top: 4px; bottom: 3px; width: 1px; background: #c8c8c8; }
.gb { height: 73px; display: flex; }
.gl { margin-top: 2px; text-align: center; color: #666; font-size: 12px; line-height: 16px; padding-right: 3px; position: relative; }
.gl-launch { padding-right: 18px; }
.launch { position: absolute; width: 8px; height: 8px; right: 5px; bottom: 0; }
.g1 { width: 280px; } .g1 .gb { padding-left: 6px; gap: 6px; }
.g2 { width: 152px; } .g2 .gb { padding-left: 7px; gap: 6px; }
.g3 { width: 140px; } .g3 .gb { padding-left: 6px; gap: 6px; }
.g4 { width: 200px; } .g4 .gb { padding-left: 7px; }
.g5 { width: 325px; } .g5 .gb { padding-left: 7px; gap: 5.5px; }
.g6 { width: 104px; } .g6 .gb { padding-left: 6px; gap: 6px; }
.g7 { width: 258px; } .g7 .gb { padding-left: 7px; gap: 5.5px; }
.g8 { width: 55px; } .g8 .gb { padding-left: 9px; }
.big { width: 36px; padding-top: 8px; display: flex; flex-direction: column; align-items: center; line-height: 15px; white-space: nowrap; color: #444; }
.big.w48 { width: 48px; } .big.w54 { width: 54px; } .big.w60 { width: 60px; }
.big.off { color: #a6a6a6; }
.big span { display: flex; align-items: center; gap: 2px; }
.ic { width: 32px; height: 32px; }
.doc { fill: #fff; stroke: #767676; }
.dd { width: 0; height: 0; border-left: 3px solid transparent; border-right: 3px solid transparent; border-top: 3px solid #666; margin-top: 6px; }
.dd.inl { margin-top: 0; display: inline-block; }
.vsep { width: 1px; height: 55px; margin-top: 10px; background: #d0d0d0; flex: none; }
.vs1 { margin-left: 1px; }
.vs4 { margin-left: 7px; margin-right: 4px; }
.col { display: flex; flex-direction: column; padding-top: 2px; }
.sm { height: 23px; display: flex; align-items: center; gap: 3px; white-space: nowrap; color: #444; }
.sm.off { color: #a6a6a6; }
.ic16 { width: 16px; height: 16px; }
.ic16t { width: 16px; height: 18px; }
.sortcol { width: 16px; padding-top: 13px; display: flex; flex-direction: column; gap: 12px; margin-right: 5px; }
.filter { width: 42px; height: 69px; padding-top: 5px; margin: 3px 3px 0 0; background: #c6c6c6; }
.t-a { font: bold 13px "Liberation Sans", sans-serif; fill: #fff; text-anchor: middle; }
.t-s { font: bold 10px "Liberation Sans", sans-serif; text-anchor: middle; }
.t-m { font: bold 11px "Liberation Sans", sans-serif; text-anchor: middle; }
.t-q { font: bold 24px "Liberation Sans", sans-serif; fill: #3f7ab5; text-anchor: middle; }
.blue { fill: #3f7ab5; } .purp { fill: #8a4fa8; }
.collapse { position: absolute; right: 3px; bottom: 5px; width: 10px; height: 6px; }

/* formula bar */
.fbar { height: 39px; flex: none; background: #e6e6e6; padding-top: 11px; display: flex; align-items: flex-start; }
.namebox { margin-left: 5px; width: 123px; height: 27px; background: #fff; border: 1px solid #d0d0d0; font-size: 14px; line-height: 25px; padding-left: 6px; color: #555; position: relative; }
.dd.nb { position: absolute; right: 4px; top: 5px; border-left-width: 4px; border-right-width: 4px; border-top-width: 4px; border-top-color: #777; }
.grip { width: 2px; height: 10px; margin: 8px 14px 0 15px; border-left: 2px dotted #b5b5b5; }
.fxbox { width: 109px; height: 27px; background: #fff; border: 1px solid #d0d0d0; display: flex; align-items: center; gap: 23px; padding-left: 12px; }
.fx { font: italic bold 13px "Liberation Serif", serif; color: #666; }
.formula { margin-left: 4px; flex: 1; height: 27px; background: #fff; border: 1px solid #d0d0d0; border-right: 0; font-size: 14px; line-height: 25px; padding-left: 10px; color: #555; position: relative; }
.dd.fchev { position: absolute; right: 3px; top: 5px; border-left-width: 4px; border-right-width: 4px; border-top-width: 4px; }

/* sheet */
.sheet { flex: 1; min-height: 0; display: flex; background: #e6e6e6; border-bottom: 1px solid #c0c0c0; overflow: hidden; }
.gridwrap { flex: none; width: 1529px; padding-top: 10px; overflow: hidden; border-right: 1px solid #ababab; }
.grid { table-layout: fixed; border-collapse: separate; border-spacing: 0; width: 1528px; background: #fff; }
.c-r { width: 20px; } .c-a { width: 86px; } .c-n { width: 134px; } .c-o { width: 99px; } .c-p { width: 118px; } .c-s { width: 38px; }
.grid thead th { height: 12px; background: #e6e6e6; font: 9px/11px "Liberation Sans", sans-serif; color: #444; font-weight: 400; border-right: 1px solid #bdbdbd; border-bottom: 1px solid #ababab; padding: 0; text-align: center; vertical-align: bottom; }
.grid thead th.sel { background: #d2d2d2; border-bottom: 2px solid #217346; }
.corner { position: relative; }
.tri { position: absolute; right: 2px; bottom: 2px; width: 0; height: 0; border-left: 8px solid transparent; border-bottom: 8px solid #c6c6c6; }
.grid tbody th { height: 28px; background: #e6e6e6; padding: 0 0 1px; font: 9px/10px "Liberation Sans", sans-serif; color: #444; text-align: center; vertical-align: bottom; border-right: 1px solid #ababab; border-bottom: 1px solid #c6c6c6; font-weight: 400; }
.grid tbody th.sel { background: #d2d2d2; border-right: 2px solid #217346; }
.grid td { padding: 1px 1px 0 0; height: 28px; font-size: 14px; line-height: 26px; color: #333; text-align: center; border-right: 1px solid #d4d4d4; border-bottom: 1px solid #d4d4d4; white-space: nowrap; overflow: hidden; }
.grid td.title { padding-right: 174px; border-right: 0; font-size: 15px; }
.grid td.h { position: relative; padding-top: 0; line-height: 27px; }
.grid td.hl { text-align: left; padding-left: 3px; }
.grid td.pink { background: #ffc7ce; color: #9c0006; }
.fb { position: absolute; right: 1px; bottom: 1px; width: 17px; height: 17px; background: #f0f0f0; border: 1px solid #ababab; }
.fb::after { content: ""; position: absolute; left: 3px; top: 6px; border-left: 4px solid transparent; border-right: 4px solid transparent; border-top: 4px solid #666; }
.fb.act { background: #d9d9d9; border-color: #8a8a8a; }

.vscroll { width: 14px; display: flex; flex-direction: column; background: #dcdcdc; padding-top: 10px; }
.vs-up { height: 13px; background: #f0f0f0; border: 1px solid #d4d4d4; }
.vs-thumb { height: 199px; background: #fff; border: 1px solid #ababab; border-top: 0; }
.vs-track { flex: 1; }
.vs-down { height: 14px; background: #fff; border: 1px solid #d4d4d4; padding-left: 1px; }
.vs-down .dd { margin: 4px 0 0 1px; border-left-width: 4px; border-right-width: 4px; border-top-width: 4px; }

/* sheet tabs */
.tabsrow { height: 28px; flex: none; background: #e6e6e6; border-bottom: 1px solid #c8c8c8; display: flex; align-items: stretch; font-size: 13px; color: #555; }
.tnav { width: 100px; display: flex; align-items: center; padding-left: 27px; gap: 19px; }
.tl, .tr { width: 0; height: 0; border-top: 4px solid transparent; border-bottom: 4px solid transparent; }
.tl { border-right: 5px solid #b5b5b5; } .tr { border-left: 5px solid #b5b5b5; }
.tl.dark { border-right-color: #666; } .tr.dark { border-left-color: #666; }
.sep { width: 1px; height: 20px; margin-top: 3px; background: #9e9e9e; flex: none; }
.tab { padding: 0 11px; line-height: 22px; white-space: nowrap; }
.tab.active { padding: 0 12px; background: #fff; color: #217346; border-top: 1px solid #ababab; border-left: 1px solid #ababab; border-right: 1px solid #ababab; border-bottom: 2px solid #217346; height: 26px; line-height: 21px; }
.tab-r { padding-right: 12px; }
.blue-t, .orange-t { background: #bdd7ee; color: #222; padding: 0 10px; margin: 2px 2px 0; height: 22px; line-height: 19px; }
.orange-t { background: #f4b183; margin-left: 3px; }
.tab-d { padding: 0 11.500px 0 11px; }
.tab-w { padding: 0 13px; }
.addsheet { margin-left: 33px; margin-top: 6px; width: 16px; height: 16px; border-radius: 50%; border: 1px solid #8a8a8a; color: #666; font: 15px/13px "Liberation Sans", sans-serif; text-align: center; }
.grip2 { margin: 8px 0 0 60px; width: 2px; height: 10px; border-left: 2px dotted #a5a5a5; }
.hscroll { margin: 6px 0 0 15px; flex: 1; height: 16px; display: flex; background: #d9d9d9; }
.hs-l { width: 15px; background: #fff; border: 1px solid #ababab; padding: 3px 0 0 4px; }
.hs-t { width: 16px; background: #fff; border: 1px solid #ababab; border-left: 0; }
.hs-track { flex: 1; }
.hs-r { width: 14px; padding: 3px 0 0 4px; }

/* status bar */
.status { height: 22px; flex: none; background: #f0f0f0; display: flex; align-items: center; color: #555; position: relative; }
.st1 { margin-left: 7px; margin-bottom: 3px; } .st2 { margin-left: 18px; margin-bottom: 3px; } .st3 { margin-left: 14px; }
.views { display: flex; margin-left: auto; height: 22px; }
.view { width: 38px; display: flex; align-items: center; justify-content: center; }
.view.on { background: #c6c6c6; }
.zoomer { margin-left: 5px; width: 182px; display: flex; align-items: center; padding-right: 6px; }
.z-min { width: 6px; height: 2px; background: #555; margin-left: 6px; }
.z-track { width: 100px; height: 1px; background: #aaa; position: relative; margin-left: 4px; }
.z-thumb { position: absolute; left: 29px; top: -5px; width: 3px; height: 10px; background: #555; }
.z-plus { margin-left: 6px; font: 15px/15px "Liberation Sans", sans-serif; color: #444; }
.z-val { margin-left: auto; font-size: 12px; }
.strip { height: 4px; flex: none; margin-left: -1px; background: #1c3b3c; }

/* chart overlay */
.chart { position: absolute; left: 1439px; top: 301px; width: 90px; height: 201px; background: #fff; border: 1px solid #d9d9d9; border-right: 0; overflow: hidden; }
.chart-svg { width: 91px; height: 201px; margin: -1px 0 0 -1px; }
.ct { font: 7px "Liberation Sans", sans-serif; fill: #8a8a8a; text-anchor: end; }
.ct.mid { text-anchor: middle; }

/* stamp */
.stamp { position: absolute; left: 1050px; top: 945px; width: 40px; height: 40px; }
.stamp-t { font: 700 3.800px "Noto Sans CJK SC", sans-serif; fill: #ee3a3a; }

/* filter menu */
.menu { position: absolute; left: 183px; top: 272px; width: 267px; height: 418px; background: #fff; border: 1px solid #c6c6c6; border-top: 0; box-shadow: 2px 2px 3px rgba(0,0,0,.25); font-size: 12px; color: #555; }
.mi { height: 25px; display: flex; align-items: center; position: relative; white-space: nowrap; padding-bottom: 2px; }
.mi.dis { color: #b5b5b5; }
.mi.hot { background: #c6c6c6; color: #444; }
.mic { width: 16px; height: 16px; margin: 0 13px 0 1px; flex: none; }
.mi u { text-underline-offset: 1px; }
.mar { position: absolute; right: 8px; top: 8px; border-top: 4px solid transparent; border-bottom: 4px solid transparent; border-left: 5px solid #666; }
.mar.lite { border-left-color: #d0d0d0; }
.msep { height: 1px; margin-left: 30px; background: #e0e0e0; }
.ms2 { margin-top: 1px; margin-bottom: 4px; }
.search { margin-left: 29px; width: 231px; height: 23px; border: 1px solid #ababab; display: flex; align-items: center; justify-content: space-between; padding: 0 4px 2px 2px; color: #888; }
.tree { margin: 5px 0 0 29px; width: 231px; height: 169px; border: 1px solid #dcdcdc; padding: 0 0 0 23px; font-size: 12px; color: #555; }
.ti { height: 16px; display: flex; align-items: center; position: relative; }
.cb { width: 10px; height: 10px; background: #fff; border: 1px solid #777; margin-right: 4px; position: relative; }
.cb::after { content: ""; position: absolute; left: 1px; top: 0; width: 6px; height: 4px; border-left: 2px solid #111; border-bottom: 2px solid #111; transform: rotate(-45deg); }
.dots { position: absolute; left: -11px; top: 0; width: 10px; height: 16px; border-left: 1px dotted #777; }
.dots::after { content: ""; position: absolute; left: 0; top: 8px; width: 9px; border-top: 1px dotted #777; }
.dots.top { top: 8px; height: 8px; } .dots.top::after { top: 0; }
.dots.end { height: 9px; }
.btns { display: flex; justify-content: flex-end; gap: 11px; margin: 20px 7px 0 0; }
.btn { width: 73px; height: 28px; background: #e1e1e1; border: 1px solid #adadad; font: 12px "Noto Sans CJK SC", sans-serif; color: #222; padding: 0 0 2px; }
.mfoot { position: absolute; left: 0; right: 0; bottom: 0; height: 11px; background: #f4f4f4; border-top: 1px solid #e0e0e0; }
.gripper { position: absolute; right: 2px; bottom: 1px; width: 6px; height: 6px; background: radial-gradient(circle, #999 1px, transparent 1.200px) 0 0 / 3px 3px; }

.submenu { position: absolute; left: 450px; top: 399px; width: 140px; height: 183px; background: #fff; border: 1px solid #c6c6c6; box-shadow: 2px 2px 3px rgba(0,0,0,.25); color: #666; padding-top: 0; }
.si { height: 25px; line-height: 23px; padding-left: 30px; white-space: nowrap; }
.si.hot { background: #c6c6c6; color: #555; margin: 0 1px; padding-left: 29px; height: 25px; }
.s3 { margin: 0 0 1px 30px; }

/* arrows */
.arrows { position: absolute; left: 0; top: 0; width: 1543px; height: 1043px; pointer-events: none; }
.arrows polygon { fill: #e6111a; filter: drop-shadow(2px 2px 2px rgba(0,0,0,.45)); }
.cursor { position: absolute; left: 572px; top: 515px; width: 14px; height: 21px; }

/* watermark */
.wm { position: absolute; left: 1383px; top: 990px; display: flex; gap: 3px; opacity: .92; }
.wm-logo { width: 42px; height: 44px; }
.wm-1 { font-size: 20.500px; line-height: 28px; font-weight: 700; color: #5b9bd5; letter-spacing: .4px; white-space: nowrap; }
.wm-2 { font: 16px/18px "Liberation Sans", sans-serif; color: #4fb56d; letter-spacing: .6px; white-space: nowrap; margin-top: 1px; }
```
